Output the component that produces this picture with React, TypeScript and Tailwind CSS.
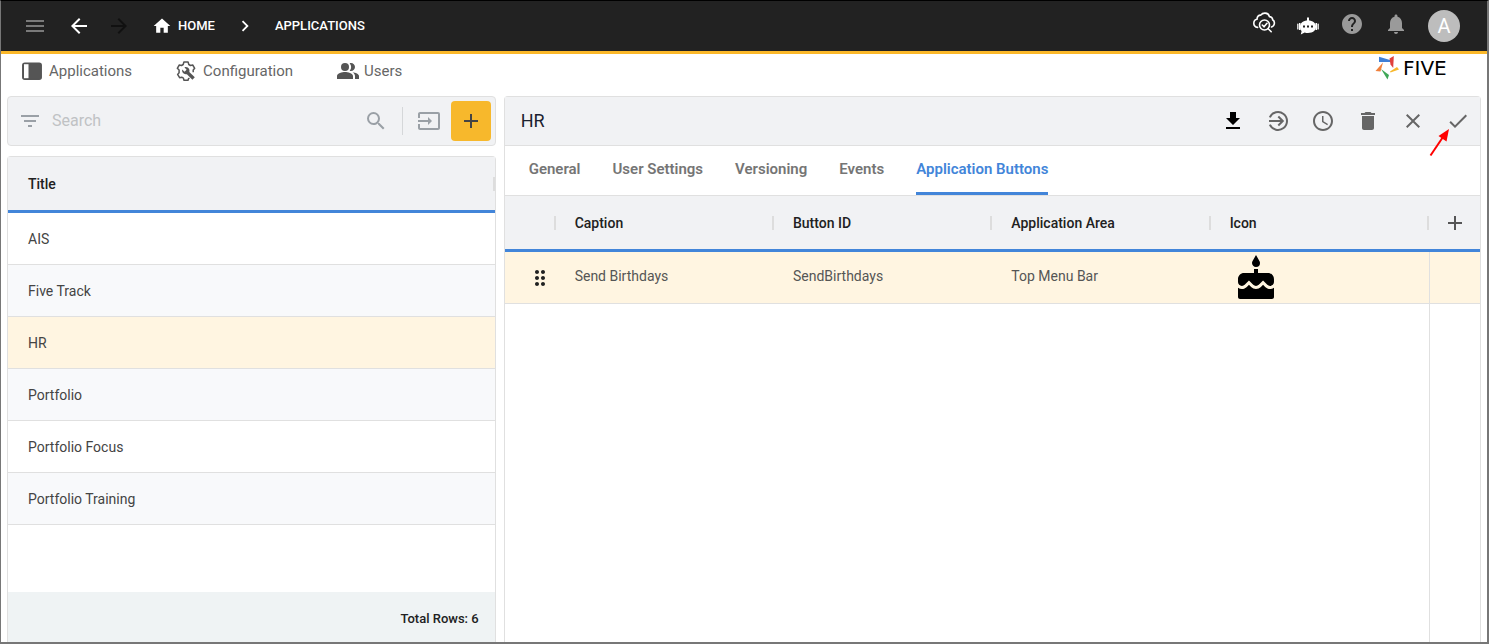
import type { ReactNode } from "react";
import {
  MdAccessTime,
  MdAdd,
  MdArrowBack,
  MdArrowForward,
  MdCake,
  MdCheck,
  MdChevronRight,
  MdClose,
  MdDelete,
  MdDragIndicator,
  MdFileDownload,
  MdFilterList,
  MdHelp,
  MdHome,
  MdInput,
  MdMenu,
  MdNotifications,
  MdPeopleAlt,
  MdSearch,
} from "react-icons/md";

const applications = ["AIS", "Five Track", "HR", "Portfolio", "Portfolio Focus", "Portfolio Training"];
const tabs = ["General", "User Settings", "Versioning", "Events", "Application Buttons"];
const columns = ["Caption", "Button ID", "Application Area", "Icon"];

function CloudSearchIcon() {
  return (
    <svg width="24" height="24" viewBox="0 0 24 24" fill="none" stroke="currentColor" strokeWidth="1.6" strokeLinecap="round" strokeLinejoin="round">
      <path d="M5.600 15.400C3.300 15 1.800 13.300 1.800 11.200c0-2 1.400-3.700 3.300-4-.2-2.500 1.600-4.300 3.700-4.100C9.700 1.800 11.300 1 13.200 1.100c2.200.1 3.700 1.500 4.200 3.500 2 .1 3.300 1.600 3.200 3.200 1.300.8 1.900 2 1.800 3.400-.1 1.800-1.200 3.200-2.900 3.700" />
      <circle cx="12.500" cy="13" r="5" />
      <path d="m10.300 13 1.700 1.800 3-3.500M16.200 16.700l3 3" />
    </svg>
  );
}

function BotIcon() {
  return (
    <svg width="24" height="24" viewBox="0 0 24 24" fill="currentColor">
      <rect x="11" y="3.500" width="2" height="4" />
      <path d="M12 6.500c5 0 8 2.600 8 6.200s-3 6.200-8 6.200c-1.200 0-2.300-.1-3.300-.5L4.800 20.500l.8-3.400C4.500 16 4 14.500 4 12.700c0-3.600 3-6.200 8-6.200z" />
      <path d="M3 9h1.500v7H3zM19.500 9H21v7h-1.500z" />
      <rect x="1.200" y="9.500" width="1.300" height="6" rx=".6" />
      <rect x="21.500" y="9.500" width="1.300" height="6" rx=".6" />
      <g fill="#222222">
        <rect x="7" y="11.500" width="2" height="2" />
        <rect x="11" y="11.500" width="2" height="2" />
        <rect x="15" y="11.500" width="2" height="2" />
      </g>
    </svg>
  );
}

function PanelIcon() {
  return (
    <svg width="20" height="20" viewBox="0 0 20 20">
      <rect x="0.800" y="2.200" width="18.400" height="16" rx="2" fill="#555" stroke="#555" strokeWidth="1.500" />
      <rect x="2" y="3.200" width="4.500" height="14" fill="#fff" />
    </svg>
  );
}

function GearWrenchIcon() {
  return (
    <svg width="20" height="20" viewBox="0 0 20 20" fill="none" stroke="#555" strokeWidth="1.500" strokeLinejoin="round">
      <path d="M13.500 17.200l-1 .5-.5 1.500H8l-.6-2-1.700-1-2.100.5-2-3.300 1.500-1.600V9L1.300 7.300 3.300 4l2.200.5 1.700-1L7.900 1h4.200l.7 2.500 1.700 1 2.200-.5 2 3.300L17.200 9v2.200" />
      <path d="M6.200 8.500l2.400 2.200 2-2-2.200-2.400c1.900-.7 4 .1 4.800 1.900.4 1 .4 1.900.1 2.700l5.500 5.400-2.400 2.400-5.500-5.500c-1 .3-2.200.1-3.200-.6-1.300-1-1.900-2.600-1.500-4.100z" fill="#555" stroke="none" />
    </svg>
  );
}

function EnterIcon() {
  return (
    <svg width="24" height="24" viewBox="0 0 24 24" fill="none" stroke="currentColor" strokeWidth="2">
      <path d="M3.800 8.300A9 9 0 1 1 3.800 15.700" />
      <path d="M3 12h13.500M12.300 7.500l4.500 4.500-4.500 4.500" />
    </svg>
  );
}

function FiveLogo() {
  return (
    <a href="#" className="flex items-center gap-1 text-black">
      <svg width="24" height="24" viewBox="0 0 24 24">
        <path d="M4 .700 15 4v2H4z" fill="#3f7fd6" />
        <path d="M14.500 2.500 18.800 0l-.6 12-2.700-3.500z" fill="#e0403c" />
        <path d="M15 15.500 22 11l2 2.500-8.500 3z" fill="#f7b82c" />
        <path d="M6 13l8 6-1.500 4.500z" fill="#3fa757" />
        <path d="M8 6.500 5.500 15.500.500 15z" fill="#f0803c" />
      </svg>
      <span className="w-[60px] font-['DejaVu_Sans',sans-serif] text-xl leading-6">FIVE</span>
    </a>
  );
}

function IconButton({ label, className = "", children }: { label: string; className?: string; children: ReactNode }) {
  return (
    <button type="button" aria-label={label} className={`relative flex shrink-0 items-center justify-center ${className}`}>
      {children}
    </button>
  );
}

function TopBar() {
  return (
    <header className="flex h-[53px] items-center justify-between border-b-3 border-[#fbb829] bg-[#222222] pr-[27px] pl-[22px] text-white">
      <div className="flex items-center text-[13px] font-medium">
        <IconButton label="Menu" className="mr-5 text-[#7a7a7a]">
          <MdMenu size={24} />
        </IconButton>
        <IconButton label="Back" className="mr-4">
          <MdArrowBack size={24} />
        </IconButton>
        <IconButton label="Forward" className="mr-[21px] text-[#111111]">
          <MdArrowForward size={24} />
        </IconButton>
        <a href="#" className="flex items-center gap-1.5">
          <MdHome size={20} />
          HOME
        </a>
        <MdChevronRight size={22} className="mx-[19px]" />
        <a href="#">APPLICATIONS</a>
      </div>
      <div className="flex items-center gap-5">
        <IconButton label="Inspect" className="pb-1">
          <CloudSearchIcon />
        </IconButton>
        <IconButton label="Assistant">
          <BotIcon />
        </IconButton>
        <IconButton label="Help" className="pb-1 text-[#9a9a9a]">
          <MdHelp size={24} />
        </IconButton>
        <IconButton label="Notifications" className="pb-1 text-[#9a9a9a]">
          <MdNotifications size={24} />
        </IconButton>
        <button type="button" className="size-8 rounded-full bg-[#bdbdbd] text-xl">
          A
        </button>
      </div>
    </header>
  );
}

function NavBar() {
  return (
    <nav className="flex h-[34px] items-center justify-between pr-6 pl-[21px] text-[15px] text-[#666666]">
      <div className="flex items-center gap-11">
        <a href="#" className="flex items-center gap-[7px]">
          <PanelIcon />
          Applications
        </a>
        <a href="#" className="flex items-center gap-[7px]">
          <GearWrenchIcon />
          Configuration
        </a>
        <a href="#" className="-ml-px flex items-center gap-1">
          <MdPeopleAlt size={24} className="text-[#555555]" />
          Users
        </a>
      </div>
      <div className="pb-1.5">
        <FiveLogo />
      </div>
    </nav>
  );
}

function SearchBar() {
  return (
    <div className="flex h-[50px] items-center rounded border border-[#e0e0e0] bg-[#f1f2f4] pr-1 pl-2.5 text-[#9aa0a6]">
      <MdFilterList size={24} className="shrink-0" />
      <input
        type="text"
        aria-label="Search"
        placeholder="Search"
        className="ml-2.5 min-w-0 flex-1 bg-transparent text-base text-[#333333] outline-none placeholder:text-[#c0c2c4]"
      />
      <IconButton label="Run search">
        <MdSearch size={24} />
      </IconButton>
      <div className="mx-3.5 h-7 w-px bg-[#d5d7d9]" />
      <IconButton label="Import" className="mr-2.5">
        <MdInput size={24} />
      </IconButton>
      <IconButton label="Add application" className="size-10 rounded bg-[#f7b82c] text-[#444444]">
        <MdAdd size={24} />
      </IconButton>
    </div>
  );
}

function ApplicationList() {
  return (
    <div className="flex flex-1 flex-col rounded-t border border-b-0 border-[#e0e0e0]">
      <table className="w-full border-separate border-spacing-0 text-left text-sm">
        <thead>
          <tr className="h-14 bg-[#f1f2f4]">
            <th className="border-b-3 border-[#4285d9] pl-5 font-medium text-[#212121]">
              <div className="flex items-center justify-between">
                Title
                <span className="h-3.5 w-0.5 bg-[#dddddd]" />
              </div>
            </th>
          </tr>
        </thead>
        <tbody>
          {applications.map((name) => (
            <tr key={name} className={`h-13 ${name === "HR" ? "bg-[#fff5e1]" : "even:bg-[#f8f9fb]"}`}>
              <td className="border-b border-[#e0e0e0] pl-5 text-[#444444]">{name}</td>
            </tr>
          ))}
        </tbody>
      </table>
      <div className="mt-auto flex h-[50px] items-center justify-end bg-[#eff3f4] px-4 pt-1 text-[13px] font-medium text-[#212121]">
        Total Rows: {applications.length}
      </div>
    </div>
  );
}

function RecordToolbar() {
  return (
    <div className="flex h-[49px] items-center justify-between border-b border-[#e0e0e0] bg-[#f1f2f4] pl-4 text-[#666666]">
      <h1 className="text-lg text-[#1c2230]">HR</h1>
      <div className="flex items-center">
        <IconButton label="Download" className="w-[45px] text-black">
          <MdFileDownload size={24} />
        </IconButton>
        <IconButton label="Open" className="w-[45px]">
          <EnterIcon />
        </IconButton>
        <IconButton label="History" className="w-[45px]">
          <MdAccessTime size={24} />
        </IconButton>
        <IconButton label="Delete" className="w-[45px]">
          <MdDelete size={24} />
        </IconButton>
        <IconButton label="Cancel" className="w-[45px]">
          <MdClose size={24} />
        </IconButton>
        <IconButton label="Save" className="w-[45px]">
          <MdCheck size={24} />
          <svg width="22" height="28" viewBox="0 0 22 28" className="pointer-events-none absolute top-5 -left-1.5">
            <path d="M1.500 26.500 14 8" stroke="#ff0000" strokeWidth="2" />
            <path d="M20 0 9.500 7l8 5.500z" fill="#ff0000" />
          </svg>
        </IconButton>
      </div>
    </div>
  );
}

function ButtonsTable() {
  return (
    <>
      <table className="w-full table-fixed border-separate border-spacing-0 text-left text-sm">
        <thead>
          <tr className="h-14 bg-[#f1f2f4]">
            <th className="w-[51px] border-b-3 border-[#4285d9]">
              <span className="ml-auto block h-3.5 w-0.5 bg-[#dddddd]" />
            </th>
            {columns.map((column) => (
              <th key={column} className="border-b-3 border-[#4285d9] pl-[19px] font-medium text-[#212121]">
                <div className="flex items-center justify-between">
                  {column}
                  <span className="h-3.5 w-0.5 bg-[#dddddd]" />
                </div>
              </th>
            ))}
            <th className="w-[51px] border-b-3 border-[#4285d9]">
              <IconButton label="Add button" className="mx-auto text-[#555555]">
                <MdAdd size={24} />
              </IconButton>
            </th>
          </tr>
        </thead>
        <tbody>
          <tr className="h-13 bg-[#fff5e1] text-[#555555]">
            <td className="border-b border-[#e0e0e0] pl-[23px] text-[#212121]">
              <MdDragIndicator size={24} />
            </td>
            <td className="border-b border-[#e0e0e0] pb-1 pl-[19px]">Send Birthdays</td>
            <td className="border-b border-[#e0e0e0] pb-1 pl-[19px]">SendBirthdays</td>
            <td className="border-b border-[#e0e0e0] pb-1 pl-[19px]">Top Menu Bar</td>
            <td className="border-b border-[#e0e0e0] pt-0.5 pl-[21px] text-black">
              <MdCake size={48} />
            </td>
            <td className="border-b border-l border-[#e0e0e0]" />
          </tr>
        </tbody>
      </table>
      <div className="flex flex-1 justify-end">
        <div className="w-[51px] border-l border-[#e0e0e0]" />
      </div>
    </>
  );
}

export default function App() {
  return (
    <div className="flex min-h-screen flex-col border border-r-2 border-b-2 border-[#777777] border-t-black bg-white font-[Roboto,sans-serif]">
      <TopBar />
      <NavBar />
      <main className="grid flex-1 grid-cols-[1fr_2fr] gap-2 px-1.5 pt-2">
        <section className="flex min-w-0 flex-col gap-2.5">
          <SearchBar />
          <ApplicationList />
        </section>
        <section className="flex min-w-0 flex-col rounded-t border border-b-0 border-[#e0e0e0]">
          <RecordToolbar />
          <div role="tablist" className="flex h-[50px] items-stretch border-b border-[#e0e0e0] px-2 text-[15px] font-semibold">
            {tabs.map((tab) => (
              <button
                key={tab}
                type="button"
                role="tab"
                aria-selected={tab === "Application Buttons"}
                className={`mx-4 border-b-3 ${
                  tab === "Application Buttons" ? "border-[#4285d9] text-[#4285d9]" : "border-transparent text-[#757575]"
                }`}
              >
                {tab}
              </button>
            ))}
          </div>
          <ButtonsTable />
        </section>
      </main>
    </div>
  );
}
